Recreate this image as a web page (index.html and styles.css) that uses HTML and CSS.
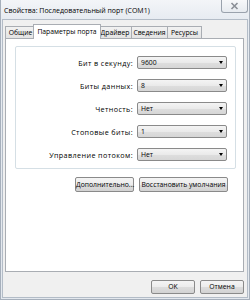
FILE: index.html
```html
<!DOCTYPE html>
<html lang="ru">
<head>
    <meta charset="UTF-8">
    <title>Свойства: Последовательный порт (COM1)</title>
    <link rel="stylesheet" href="styles.css">
</head>
<body>
    <div class="window">
        <div class="titlebar">
            <span class="title">Свойства: Последовательный порт (COM1)</span>
            <div class="close">
                <svg width="9" height="8" viewBox="0 0 9 8">
                    <path d="M1.5 1 L7.5 7 M7.5 1 L1.5 7" stroke="#8a8f96" stroke-width="1.6" fill="none"/>
                </svg>
            </div>
        </div>
        <div class="client">
            <div class="tabs">
                <div class="tab tab-general">Общие</div>
                <div class="tab tab-port active">Параметры порта</div>
                <div class="tab tab-driver">Драйвер</div>
                <div class="tab tab-details">Сведения</div>
                <div class="tab tab-resources">Ресурсы</div>
            </div>
            <div class="panel">
                <div class="group">
                    <div class="row">
                        <span class="label">Бит в секунду:</span>
                        <div class="combo">9600<span class="arrow"></span></div>
                    </div>
                    <div class="row">
                        <span class="label">Биты данных:</span>
                        <div class="combo">8<span class="arrow"></span></div>
                    </div>
                    <div class="row">
                        <span class="label">Четность:</span>
                        <div class="combo">Нет<span class="arrow"></span></div>
                    </div>
                    <div class="row">
                        <span class="label">Стоповые биты:</span>
                        <div class="combo">1<span class="arrow"></span></div>
                    </div>
                    <div class="row">
                        <span class="label">Управление потоком:</span>
                        <div class="combo">Нет<span class="arrow"></span></div>
                    </div>
                </div>
                <div class="panel-buttons">
                    <div class="btn btn-advanced">Дополнительно...</div>
                    <div class="btn btn-defaults">Восстановить умолчания</div>
                </div>
            </div>
            <div class="dialog-buttons">
                <div class="btn btn-dialog">OK</div>
                <div class="btn btn-dialog">Отмена</div>
            </div>
        </div>
    </div>
</body>
</html>
```

FILE: styles.css
```css
* {
    box-sizing: border-box;
}

body {
    margin: 0;
    font-family: 'Open Sans', 'Noto Sans', sans-serif;
    font-size: 6.8px;
    color: #000;
}

.window {
    width: 250px;
    height: 300px;
    padding: 0 1px 1px 1px;
    background: linear-gradient(#f3f5f8, #e6ebf1 20px, #e3e8ee);
    border: 1px solid #a6afbb;
    border-top: none;
    display: flex;
    flex-direction: column;
}

.titlebar {
    height: 19px;
    display: flex;
    justify-content: space-between;
    align-items: flex-start;
}

.title {
    padding: 6px 0 0 2px;
    font-size: 7px;
    line-height: 9px;
    white-space: nowrap;
}

.close {
    width: 27px;
    height: 13px;
    border: 1px solid #9aa2ad;
    border-top: none;
    border-radius: 0 0 3px 3px;
    background: linear-gradient(#f7f8fa, #e7ebf0);
    display: flex;
    align-items: center;
    justify-content: center;
}

.client {
    flex: 1;
    background: #f0f0f0;
    border: 1px solid #b3bcc7;
    padding: 0 3px 0 2px;
    display: flex;
    flex-direction: column;
}

.tabs {
    height: 18px;
    display: flex;
    align-items: flex-end;
}

.tab {
    height: 12px;
    line-height: 11px;
    text-align: center;
    border: 1px solid #a9adb3;
    border-bottom: none;
    margin-left: -1px;
    background: linear-gradient(#f2f2f2, #e3e3e3);
    white-space: nowrap;
}

.tab-general {
    width: 31px;
    margin-left: 0;
}

.tab-port {
    width: 68px;
}

.tab-driver {
    width: 34px;
}

.tab-details {
    width: 37px;
}

.tab-resources {
    width: 35px;
}

.tab.active {
    height: 15px;
    line-height: 13px;
    margin: 0 -2px -1px -3px;
    background: #fff;
    position: relative;
    z-index: 1;
}

.panel {
    height: 234px;
    background: #fff;
    border: 1px solid #a9adb3;
    padding: 7px 0 0 9px;
}

.group {
    width: 221px;
    border: 1px solid #d5dfe5;
    border-radius: 2px;
    padding: 9px 7px 7px 0;
    display: flex;
    flex-direction: column;
    gap: 10px;
}

.row {
    display: flex;
    align-items: center;
    gap: 4px;
}

.label {
    width: 117px;
    font-size: 7.2px;
    letter-spacing: 0.4px;
    text-align: right;
    white-space: nowrap;
}

.combo {
    width: 90px;
    height: 13px;
    line-height: 11px;
    padding-left: 3px;
    border: 1px solid #8a8a8a;
    border-radius: 2px;
    background: linear-gradient(#f4f4f4, #eaeaea 50%, #dedede 51%, #d6d6d6);
    display: flex;
    align-items: center;
    justify-content: space-between;
}

.arrow {
    width: 0;
    height: 0;
    margin-right: 3px;
    border-left: 2.5px solid transparent;
    border-right: 2.5px solid transparent;
    border-top: 3px solid #000;
}

.panel-buttons {
    width: 221px;
    margin-top: 8px;
    padding-right: 8px;
    display: flex;
    justify-content: flex-end;
    gap: 5px;
}

.btn {
    height: 15px;
    line-height: 13px;
    text-align: center;
    border: 1px solid #8a8a8a;
    border-radius: 2px;
    background: linear-gradient(#f4f4f4, #ececec 50%, #dddddd 51%, #d2d2d2);
    white-space: nowrap;
}

.btn-advanced {
    width: 59px;
}

.btn-defaults {
    width: 89px;
}

.dialog-buttons {
    margin-top: 8px;
    display: flex;
    justify-content: flex-end;
    gap: 5px;
}

.btn-dialog {
    width: 44px;
    height: 14px;
    line-height: 12px;
}
```
